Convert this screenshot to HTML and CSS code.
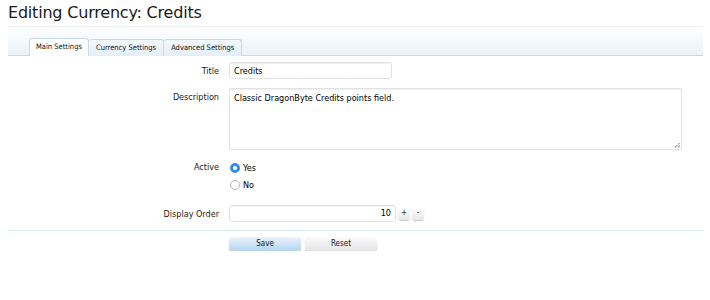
FILE: index.html
```html
<!DOCTYPE html>

<html>
    <head>
        <meta charset="utf-8">

        <link rel="stylesheet" href="styles.css">
    </head>

    <body>
        <h1 class="title">
            Editing Currency: Credits
        </h1>

        <div class="tabbar">
            <div class="tab active">Main Settings</div>
            <div class="tab">Currency Settings</div>
            <div class="tab">Advanced Settings</div>
        </div>

        <form class="form">
            <div class="row">
                <div class="label">Title</div>
                <input type="text" class="box title-box" value="Credits">
            </div>

            <div class="row row-top desc-row">
                <div class="label label-top">Description</div>
                <div class="area">
                    Classic DragonByte Credits points field.
                    <span class="grip"></span>
                </div>
            </div>

            <div class="row row-top radios-row">
                <div class="label">Active</div>
                <div class="radios">
                    <div class="radio"><span class="dot on"></span>Yes</div>
                    <div class="radio"><span class="dot"></span>No</div>
                </div>
            </div>

            <div class="row order-row">
                <div class="label">Display Order</div>
                <div class="spin">
                    <div class="box order-box">10</div>
                    <div class="mini">+</div>
                    <div class="mini">-</div>
                </div>
            </div>
        </form>

        <div class="submit">
            <div class="btn primary">Save</div>
            <div class="btn">Reset</div>
        </div>
    </body>
</html>
```

FILE: styles.css
```css
body
{
    margin: 0;
    padding: 0 7px 0 8px;
    background: #ffffff;
    color: #000000;
    font-family: "DejaVu Sans Condensed", "DejaVu Sans", sans-serif;
    font-stretch: condensed;
    font-size: 9px;
}

.title
{
    margin: 0;
    padding-top: 3px;
    height: 23px;
    font-family: "DejaVu Sans", sans-serif;
    font-stretch: normal;
    font-weight: normal;
    font-size: 16px;
    letter-spacing: -0.2px;
    color: #1a1a1a;
    border-bottom: 1px solid #eef2f7;
}

.tabbar
{
    display: flex;
    align-items: flex-end;
    height: 28px;
    padding-left: 21px;
    background: linear-gradient(#ffffff, #e9f2fa);
    border-bottom: 1px solid #c2d9ee;
}

.tab
{
    height: 16px;
    line-height: 16px;
    padding: 0 7px;
    margin-bottom: -1px;
    font-size: 7.5px;
    color: #111111;
    background: linear-gradient(#f3f8fc, #e3eef8);
    border: 1px solid #c2d9ee;
    border-bottom: none;
    border-left: none;
    border-radius: 3px 3px 0 0;
}

.tab.active
{
    padding: 0 6px;
    height: 17px;
    background: #ffffff;
    border-left: 1px solid #c2d9ee;
}

.form
{
    display: flex;
    flex-direction: column;
    margin: 0;
    padding: 6px 0 8px 0;
    border-bottom: 1px solid #d9ebf3;
}

.row
{
    display: grid;
    grid-template-columns: 211px auto;
    column-gap: 10px;
    align-items: center;
}

.row-top
{
    align-items: start;
}

.desc-row
{
    margin-top: 9px;
}

.radios-row
{
    margin-top: 12px;
}

.order-row
{
    margin-top: 14px;
}

.label
{
    text-align: right;
    color: #1a1a1a;
}

.label-top
{
    padding-top: 4px;
}

.box
{
    box-sizing: border-box;
    height: 17px;
    margin: 0;
    padding: 0 4px;
    border: 1px solid #e2e2e2;
    border-radius: 3px;
    background: #ffffff;
    font-family: "DejaVu Sans Condensed", "DejaVu Sans", sans-serif;
    font-stretch: condensed;
    font-size: 9px;
    color: #000000;
    box-shadow: inset 0 1px 1px #f0f0f0;
}

.box:focus
{
    outline: none;
}

.title-box
{
    width: 163px;
}

.area
{
    position: relative;
    box-sizing: border-box;
    width: 453px;
    height: 62px;
    padding: 3px 4px;
    border: 1px solid #e2e2e2;
    border-radius: 2px;
    line-height: 12px;
    box-shadow: inset 0 1px 1px #f0f0f0;
}

.grip
{
    position: absolute;
    right: 1px;
    bottom: 1px;
    width: 6px;
    height: 6px;
    background: linear-gradient(135deg, transparent 50%, #b5b5b5 50%, #b5b5b5 60%, transparent 60%, transparent 75%, #b5b5b5 75%, #b5b5b5 85%, transparent 85%);
}

.radios
{
    display: flex;
    flex-direction: column;
    gap: 5px;
}

.radio
{
    display: flex;
    align-items: center;
    height: 12px;
}

.dot
{
    box-sizing: border-box;
    width: 10px;
    height: 10px;
    margin: 0 3px 0 1px;
    border: 1px solid #b9b9b9;
    border-radius: 50%;
    background: #ffffff;
}

.dot.on
{
    border: 3px solid #3b8de8;
}

.spin
{
    display: flex;
    align-items: center;
    gap: 2px;
}

.order-box
{
    width: 167px;
    line-height: 15px;
    text-align: right;
}

.mini
{
    width: 12px;
    height: 13px;
    line-height: 12px;
    text-align: center;
    font-size: 8px;
    color: #333333;
    border-radius: 3px;
    background: linear-gradient(#ffffff, #e7e7e7);
    box-shadow: 0 1px 1px #c8c8c8;
}

.submit
{
    display: flex;
    gap: 4px;
    padding: 6px 0 0 221px;
}

.btn
{
    width: 72px;
    height: 14px;
    line-height: 14px;
    text-align: center;
    font-size: 8px;
    color: #111111;
    border-radius: 4px;
    background: linear-gradient(#fbfbfb, #e4e4e8);
    box-shadow: 0 1px 1px #b4b4b4;
}

.btn.primary
{
    background: linear-gradient(#eaf3fb, #b3d4ef);
}
```
